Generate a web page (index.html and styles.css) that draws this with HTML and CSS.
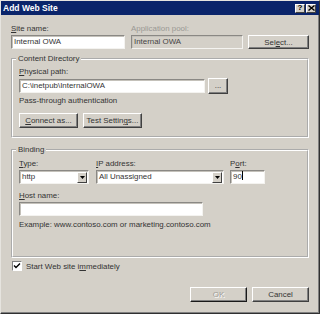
FILE: index.html
```html
<!DOCTYPE html>
<html lang="en">
<head>
  <meta charset="UTF-8" />
  <title>Add Web Site</title>
  <link rel="stylesheet" href="styles.css">
</head>
<body>
  <div class="window">
    <div class="titlebar">
      <span class="title">Add Web Site</span>
      <span class="capbtn">?</span>
      <span class="capbtn">
        <svg width="7" height="6" viewBox="0 0 7 6"><path d="M0.5 0.5L6.5 5.5M6.5 0.5L0.5 5.5" stroke="#000" stroke-width="1.4"/></svg>
      </span>
    </div>

    <div class="main">
      <div class="row">
        <div class="col site">
          <div class="label"><u>S</u>ite name:</div>
          <div class="edit">Internal OWA</div>
        </div>
        <div class="col pool">
          <div class="label disabled">Application pool:</div>
          <div class="edit readonly">Internal OWA</div>
        </div>
        <div class="btn select">Sel<u>e</u>ct...</div>
      </div>

      <fieldset class="group content">
        <legend>Content Directory</legend>
        <div class="label"><u>P</u>hysical path:</div>
        <div class="pathrow">
          <div class="edit path">C:\inetpub\InternalOWA</div>
          <div class="btn browse">...</div>
        </div>
        <div class="note">Pass-through authentication</div>
        <div class="btnrow">
          <div class="btn small"><u>C</u>onnect as...</div>
          <div class="btn small">Test Settin<u>g</u>s...</div>
        </div>
      </fieldset>

      <fieldset class="group binding">
        <legend>Binding</legend>
        <div class="row">
          <div class="col type">
            <div class="label"><u>T</u>ype:</div>
            <div class="combo">
              <span class="value">http</span>
              <span class="arrow"><svg width="5" height="3" viewBox="0 0 5 3"><path d="M0 0H5L2.5 3Z" fill="#000"/></svg></span>
            </div>
          </div>
          <div class="col ip">
            <div class="label"><u>I</u>P address:</div>
            <div class="combo">
              <span class="value">All Unassigned</span>
              <span class="arrow"><svg width="5" height="3" viewBox="0 0 5 3"><path d="M0 0H5L2.5 3Z" fill="#000"/></svg></span>
            </div>
          </div>
          <div class="col port">
            <div class="label">P<u>o</u>rt:</div>
            <div class="edit">90<span class="caret"></span></div>
          </div>
        </div>
        <div class="col host">
          <div class="label"><u>H</u>ost name:</div>
          <div class="edit"></div>
        </div>
        <div class="note example">Example: www.contoso.com or marketing.contoso.com</div>
      </fieldset>

      <div class="check">
        <span class="box"><svg width="8" height="8" viewBox="0 0 8 8"><path d="M1 3.5L3 5.5L7 1.5" fill="none" stroke="#000" stroke-width="1.4"/></svg></span>
        <span>Start Web site i<u>m</u>mediately</span>
      </div>

      <div class="actions">
        <div class="btn action default">OK</div>
        <div class="btn action">Cancel</div>
      </div>
    </div>
  </div>
</body>
</html>
```

FILE: styles.css
```css
* {
  box-sizing: border-box;
}
body {
  margin: 0;
  background: #d4d0c8;
  font-family: "Liberation Sans", Arial, sans-serif;
  font-size: 7.9px;
  color: #333;
}
.window {
  width: 320px;
  height: 314px;
  background: #d4d0c8;
  border: 1px solid;
  border-color: #e6e4df #303030 #303030 #e6e4df;
  box-shadow: inset -1px -1px 0 #808080;
}
.titlebar {
  height: 14px;
  background: #0a246a;
  display: flex;
  align-items: center;
  padding: 0 3px 0 2px;
}
.title {
  flex: 1;
  color: #fff;
  font-weight: bold;
  font-size: 8.5px;
}
.capbtn {
  width: 10px;
  height: 9px;
  background: #d4d0c8;
  border: 1px solid;
  border-color: #fff #404040 #404040 #fff;
  display: flex;
  align-items: center;
  justify-content: center;
  font-weight: bold;
  font-size: 8px;
  color: #000;
  line-height: 1;
}
.capbtn + .capbtn {
  margin-left: 1px;
}
.main {
  padding: 9px 10px 0 10px;
}
.row {
  display: flex;
  align-items: flex-end;
}
.col {
  display: flex;
  flex-direction: column;
}
.label {
  height: 10px;
  line-height: 10px;
  margin-bottom: 1px;
  white-space: nowrap;
}
.disabled {
  color: #9a9894;
}
.edit {
  height: 14px;
  background: #fff;
  border: 1px solid;
  border-color: #8a8884 #f4f3f0 #f4f3f0 #8a8884;
  box-shadow: inset 1px 1px 0 #c4c1ba;
  padding: 0 2px;
  line-height: 12px;
  white-space: nowrap;
  overflow: hidden;
}
.readonly {
  background: #d4d0c8;
  color: #444;
}
.caret {
  display: inline-block;
  width: 1px;
  height: 9px;
  background: #000;
  vertical-align: -1px;
}
.btn {
  height: 15px;
  background: #d4d0c8;
  border: 1px solid;
  border-color: #fff #404040 #404040 #fff;
  box-shadow: inset -1px -1px 0 #808080;
  display: flex;
  align-items: center;
  justify-content: center;
  white-space: nowrap;
}
.site {
  width: 114px;
}
.pool {
  width: 112px;
  margin-left: 6px;
}
.select {
  width: 61px;
  height: 14px;
  margin-left: 5px;
}
.group {
  margin: 5px 0 0;
  border: 2px groove #fff;
  padding: 3px 6px 8px;
  min-width: 0;
}
.group legend {
  padding: 0 2px;
  margin-left: -3px;
  line-height: 10px;
  height: 10px;
}
.pathrow {
  display: flex;
  align-items: center;
  height: 16px;
}
.path {
  width: 186px;
}
.browse {
  width: 20px;
  height: 16px;
  margin-left: 3px;
  padding-bottom: 2px;
}
.note {
  margin-top: 2px;
  height: 10px;
  line-height: 10px;
  white-space: nowrap;
}
.btnrow {
  display: flex;
  gap: 5px;
  margin-top: 7px;
}
.small {
  width: 59px;
}
.binding {
  margin-top: 7px;
  padding: 4px 6px 26px;
}
.combo {
  height: 14px;
  background: #fff;
  border: 1px solid;
  border-color: #8a8884 #f4f3f0 #f4f3f0 #8a8884;
  box-shadow: inset 1px 1px 0 #c4c1ba;
  display: flex;
  align-items: center;
  padding-right: 1px;
}
.combo .value {
  flex: 1;
  padding: 0 2px;
  line-height: 12px;
  white-space: nowrap;
}
.combo .arrow {
  width: 10px;
  height: 11px;
  background: #d4d0c8;
  border: 1px solid;
  border-color: #fff #404040 #404040 #fff;
  display: flex;
  align-items: center;
  justify-content: center;
}
.type {
  width: 70px;
}
.ip {
  width: 128px;
  margin-left: 7px;
}
.port {
  width: 35px;
  margin-left: 6px;
}
.host {
  width: 184px;
  margin-top: 7px;
}
.example {
  margin-top: 4px;
}
.check {
  display: flex;
  align-items: center;
  height: 10px;
  margin-top: 3px;
  padding-left: 1px;
}
.box {
  width: 10px;
  height: 10px;
  background: #fff;
  border: 1px solid;
  border-color: #808080 #fff #fff #808080;
  display: flex;
  align-items: center;
  justify-content: center;
  margin-right: 4px;
}
.actions {
  display: flex;
  justify-content: flex-end;
  gap: 5px;
  margin-top: 16px;
}
.action {
  width: 57px;
}
.default {
  color: #a09d97;
  text-shadow: 1px 1px 0 #fff;
  border-color: #fff #1a1a1a #1a1a1a #fff;
}
```
